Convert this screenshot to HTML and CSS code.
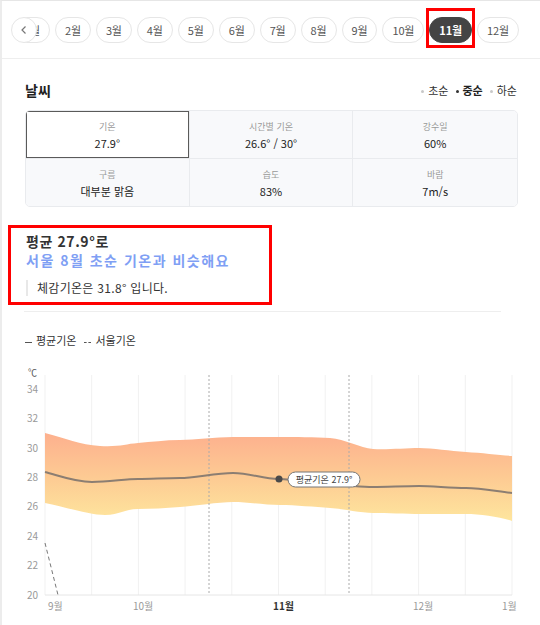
FILE: index.html
```html
<!DOCTYPE html>
<html lang="ko">
<head>
    <meta charset="UTF-8">
    <meta name="viewport" content="width=device-width, initial-scale=1.0">
    <title>월별 날씨</title>
    <link rel="stylesheet" href="styles.css">
</head>
<body>
    <div class="page">
        <!-- Month tabs -->
        <nav class="months">
            <button class="months-prev" aria-label="이전">
                <svg width="10" height="10" viewBox="0 0 10 10"><path d="M6.5 1.5 L3 5 L6.5 8.5" fill="none" stroke="#777" stroke-width="1.2"/></svg>
            </button>
            <ul class="month-list">
                <li class="month">1월</li>
                <li class="month">2월</li>
                <li class="month">3월</li>
                <li class="month">4월</li>
                <li class="month">5월</li>
                <li class="month">6월</li>
                <li class="month">7월</li>
                <li class="month">8월</li>
                <li class="month">9월</li>
                <li class="month">10월</li>
                <li class="month active">11월</li>
                <li class="month">12월</li>
            </ul>
        </nav>

        <!-- Weather stats -->
        <section class="weather">
            <div class="weather-head">
                <h2 class="weather-title">날씨</h2>
                <ul class="period">
                    <li>초순</li>
                    <li class="on">중순</li>
                    <li>하순</li>
                </ul>
            </div>
            <div class="stats">
                <div class="stat active"><span class="stat-label">기온</span><span class="stat-value">27.9°</span></div>
                <div class="stat"><span class="stat-label">시간별 기온</span><span class="stat-value">26.6° / 30°</span></div>
                <div class="stat"><span class="stat-label">강수일</span><span class="stat-value">60%</span></div>
                <div class="stat"><span class="stat-label">구름</span><span class="stat-value">대부분 맑음</span></div>
                <div class="stat"><span class="stat-label">습도</span><span class="stat-value">83%</span></div>
                <div class="stat"><span class="stat-label">바람</span><span class="stat-value">7m/s</span></div>
            </div>
        </section>

        <!-- Summary -->
        <div class="summary">
            <p class="summary-avg">평균 27.9°로</p>
            <p class="summary-compare">서울 8월 초순 기온과 비슷해요</p>
            <p class="summary-feel">체감기온은 31.8° 입니다.</p>
        </div>

        <hr class="divider">

        <div class="legend">
            <span class="legend-item"><i class="legend-line"></i>평균기온</span>
            <span class="legend-item"><i class="legend-line dashed"></i>서울기온</span>
        </div>

        <!-- Chart -->
        <svg class="chart" width="538" height="260" viewBox="2 365 538 260">
            <defs>
                <linearGradient id="band" x1="0" y1="433" x2="0" y2="520" gradientUnits="userSpaceOnUse">
                    <stop offset="0" stop-color="#fdb08e"/>
                    <stop offset="0.5" stop-color="#fdca93"/>
                    <stop offset="1" stop-color="#fee59d"/>
                </linearGradient>
            </defs>

            <text class="axis-unit" x="28" y="376">℃</text>
            <g class="axis-y">
                <text x="38" y="393">34</text>
                <text x="38" y="422">32</text>
                <text x="38" y="452">30</text>
                <text x="38" y="481">28</text>
                <text x="38" y="510">26</text>
                <text x="38" y="540">24</text>
                <text x="38" y="569">22</text>
                <text x="38" y="599">20</text>
            </g>

            <g class="grid">
                <line x1="45" y1="375" x2="45" y2="595"/>
                <line x1="91.7" y1="375" x2="91.7" y2="595"/>
                <line x1="138.4" y1="375" x2="138.4" y2="595"/>
                <line x1="185.1" y1="375" x2="185.1" y2="595"/>
                <line x1="231.8" y1="375" x2="231.8" y2="595"/>
                <line x1="278.5" y1="375" x2="278.5" y2="595"/>
                <line x1="325.2" y1="375" x2="325.2" y2="595"/>
                <line x1="371.9" y1="375" x2="371.9" y2="595"/>
                <line x1="418.6" y1="375" x2="418.6" y2="595"/>
                <line x1="465.3" y1="375" x2="465.3" y2="595"/>
                <line x1="512" y1="375" x2="512" y2="595"/>
            </g>

            <path fill="url(#band)" d="M45,433 C65,438 80,445 100,446 S125,444 138,443 S165,440 180,440 S215,437 233,437 S265,437 280,437 S315,437 330,438 S360,448 373,449 S405,448 419,448 S450,451 466,452 S500,455 512,456 L512,521 C500,517 480,514 466,514 S430,514 419,514 S385,513 373,513 S345,509 330,508 S295,505 280,505 S248,502 233,502 S195,506 180,507 S152,509 138,509 S120,515 105,515 S65,507 45,503 Z"/>

            <line class="marker" x1="209" y1="375" x2="209" y2="595"/>
            <line class="marker" x1="349" y1="375" x2="349" y2="595"/>
            <line class="axis-x" x1="45" y1="595" x2="512" y2="595"/>

            <path class="avg-line" d="M45,472 C60,476 75,482 92,482 S125,479 138,479 S165,478 180,478 S215,473 233,473 S262,479 279,479 S315,485 330,485 S360,487 373,487 S405,486 419,486 S450,488 466,488 S500,492 512,493"/>
            <path class="seoul-line" d="M45,543 L58,595"/>

            <circle cx="279" cy="479" r="3.5" fill="#4a4a4a"/>
            <rect class="tip" x="288" y="472" width="72" height="15" rx="7.5"/>
            <text class="tip-text" x="324" y="483">평균기온 27.9°</text>

            <g class="axis-labels">
                <text x="48" y="610">9월</text>
                <text x="133" y="610">10월</text>
                <text class="now" x="273" y="610">11월</text>
                <text x="413" y="610">12월</text>
                <text x="502" y="610">1월</text>
            </g>
        </svg>
    </div>
</body>
</html>
```

FILE: styles.css
```css
/* Reset */
* {
    margin: 0;
    padding: 0;
    box-sizing: border-box;
}

body {
    font-family: "Noto Sans CJK KR", "Noto Sans", sans-serif;
    background-color: #fff;
    color: #333;
    width: 540px;
    height: 625px;
    overflow: hidden;
}

ul {
    list-style: none;
}

.page {
    border-top: 1px solid #e6e6e6;
    border-left: 2px solid #ececec;
    height: 100%;
}

/* Month tabs */
.months {
    position: relative;
    height: 58px;
    border-bottom: 1px solid #eeeeee;
    display: flex;
    align-items: center;
    padding-left: 12px;
}

.month-list {
    display: flex;
    gap: 5px;
}

.month {
    position: relative;
    height: 26px;
    padding: 0 9px;
    border: 1px solid #e6e6e6;
    border-radius: 13px;
    font-size: 11px;
    line-height: 24px;
    letter-spacing: -0.15px;
    color: #555;
    white-space: nowrap;
}

.month.active {
    background-color: #444;
    border-color: #444;
    color: #fff;
    font-weight: bold;
}

/* annotation box round the selected month */
.month.active::after {
    content: "";
    position: absolute;
    top: -10px;
    bottom: -6px;
    left: -4px;
    right: -4px;
    border: 3px solid #ff0000;
}

.months-prev {
    position: absolute;
    left: 9px;
    top: 16px;
    z-index: 1;
    width: 26px;
    height: 26px;
    border: 1px solid #e6e6e6;
    border-radius: 50%;
    background-color: #fff;
    display: flex;
    align-items: center;
    justify-content: center;
}

/* Weather */
.weather {
    padding: 21px 22px 0 23px;
}

.weather-head {
    display: flex;
    justify-content: space-between;
    align-items: center;
    height: 20px;
    margin-bottom: 10px;
}

.weather-title {
    font-size: 14px;
    font-weight: bold;
    line-height: 20px;
    color: #222;
}

.period {
    display: flex;
    gap: 7px;
    font-size: 11px;
    line-height: 16px;
    color: #333;
    margin-right: 1px;
}

.period li::before {
    content: "";
    display: inline-block;
    width: 3px;
    height: 3px;
    border-radius: 50%;
    background-color: #c8c8c8;
    margin-right: 4px;
    vertical-align: middle;
    position: relative;
    top: -1px;
}

.period li.on {
    font-weight: bold;
    color: #222;
}

.period li.on::before {
    background-color: #333;
}

.stats {
    display: grid;
    grid-template-columns: repeat(3, 1fr);
    border: 1px solid #e9ebee;
    border-radius: 5px;
    overflow: hidden;
}

.stat {
    height: 47px;
    background-color: #f8f9fb;
    border-right: 1px solid #e9ebee;
    display: flex;
    flex-direction: column;
    align-items: center;
    padding-top: 10px;
}

.stat:nth-child(3n) {
    border-right: none;
}

.stat:nth-child(-n+3) {
    height: 48px;
    border-bottom: 1px solid #e9ebee;
}

.stat.active {
    background-color: #fff;
    box-shadow: inset 0 0 0 1px #5a5a5a;
}

.stat-label {
    font-size: 9px;
    line-height: 12px;
    color: #999;
}

.stat-value {
    font-size: 11px;
    line-height: 16px;
    margin-top: 2px;
    color: #222;
}

/* Summary (boxed in red) */
.summary {
    width: 264px;
    margin: 18px 0 0 6px;
    border: 3px solid #ff0000;
    padding: 4px 0 6px 15px;
}

.summary-avg {
    font-size: 14px;
    font-weight: bold;
    line-height: 18px;
    letter-spacing: 0.6px;
    color: #333;
}

.summary-compare {
    font-size: 14px;
    font-weight: bold;
    line-height: 20px;
    letter-spacing: 1.5px;
    color: #7f9ff4;
}

.summary-feel {
    margin-top: 10px;
    font-size: 12px;
    line-height: 16px;
    letter-spacing: 0.3px;
    color: #333;
    border-left: 2px solid #e8e8e8;
    padding-left: 9px;
}

.divider {
    border: none;
    border-top: 1px solid #eeeeee;
    width: 477px;
    margin: 6px 0 0 22px;
}

/* Legend */
.legend {
    margin: 20px 0 0 23px;
    font-size: 11px;
    line-height: 16px;
    color: #333;
    display: flex;
    gap: 8px;
}

.legend-line {
    display: inline-block;
    width: 7px;
    border-top: 1px solid #555;
    vertical-align: middle;
    margin-right: 4px;
}

.legend-line.dashed {
    border-top-style: dashed;
}

/* Chart */
.chart {
    display: block;
    margin-top: 17px;
    font-family: "Noto Sans CJK KR", "Noto Sans", sans-serif;
}

.axis-unit {
    font-size: 9px;
    fill: #555;
}

.axis-y text {
    font-size: 10px;
    fill: #999;
    text-anchor: end;
}

.grid line {
    stroke: #f1f1f1;
    stroke-width: 1;
}

.marker {
    stroke: #aaa;
    stroke-width: 1;
    stroke-dasharray: 2 2;
}

.axis-x {
    stroke: #e6e6e6;
    stroke-width: 1;
}

.avg-line {
    fill: none;
    stroke: #8c7e72;
    stroke-width: 2;
}

.seoul-line {
    fill: none;
    stroke: #777;
    stroke-width: 1;
    stroke-dasharray: 4 3;
}

.tip {
    fill: #fff;
    stroke: #777;
    stroke-width: 1;
}

.tip-text {
    font-size: 9px;
    fill: #444;
    text-anchor: middle;
}

.axis-labels text {
    font-size: 10px;
    fill: #999;
}

.axis-labels text.now {
    fill: #333;
    font-weight: bold;
}
```
